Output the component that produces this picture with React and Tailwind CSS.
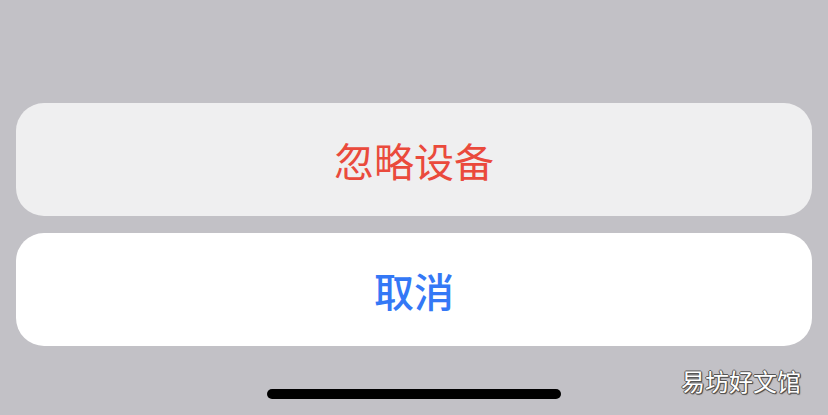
export default function App() {
  const font = { fontFamily: '"Noto Sans CJK SC", "Noto Sans", sans-serif' }
  return (
    <div className="relative flex h-[415px] w-[828px] flex-col bg-[#c2c1c6]" style={font}>
      <div className="flex flex-col gap-[17px] px-4 pt-[103px]">
        <button className="flex h-[113px] items-center justify-center rounded-[28px] bg-[#efeff0] text-[40px] font-normal text-[#ea4a3c]">
          忽略设备
        </button>
        <button className="flex h-[113px] items-center justify-center rounded-[28px] bg-white text-[40px] font-medium text-[#3478f6]">
          取消
        </button>
      </div>
      <div className="mt-[43px] flex justify-center">
        <div className="h-[10px] w-[294px] rounded-full bg-black" />
      </div>
      <span
        className="absolute right-[27px] top-[369px] text-[24px] leading-none text-white"
        style={{
          textShadow:
            '1px 0 0 #555, -1px 0 0 #555, 0 1px 0 #555, 0 -1px 0 #555, 1px 1px 1px #333',
        }}
      >
        易坊好文馆
      </span>
    </div>
  )
}
